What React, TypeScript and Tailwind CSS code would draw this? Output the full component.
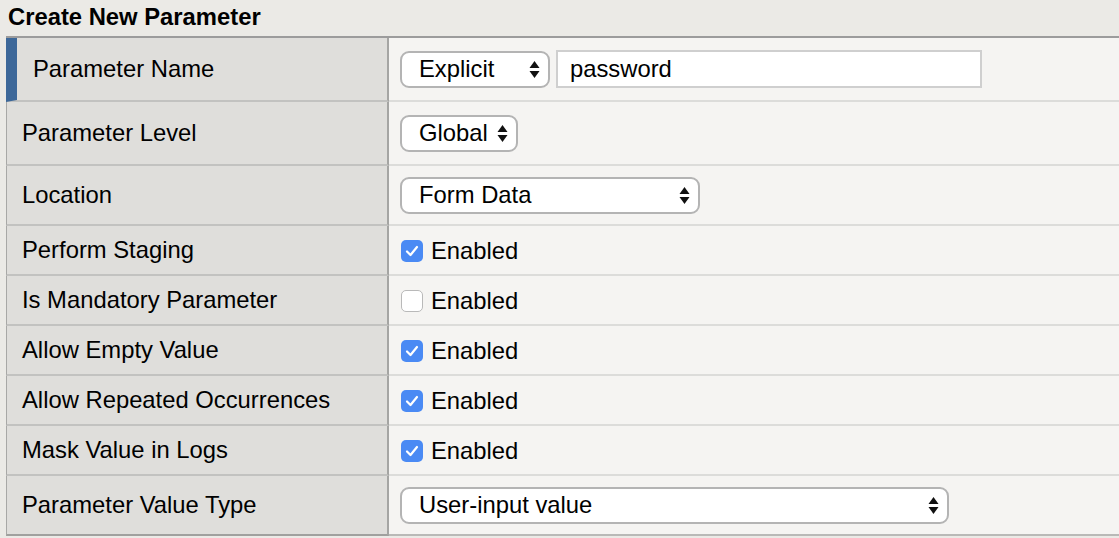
import React from "react";

type Row = {
  label: string;
  h: string;
  kind: "name" | "select" | "check";
  value?: string;
  width?: string;
  checked?: boolean;
};

const rows: Row[] = [
  { label: "Parameter Name", h: "h-[64px]", kind: "name" },
  { label: "Parameter Level", h: "h-[64px]", kind: "select", value: "Global", width: "w-[118px]" },
  { label: "Location", h: "h-[60px]", kind: "select", value: "Form Data", width: "w-[300px]" },
  { label: "Perform Staging", h: "h-[50px]", kind: "check", checked: true },
  { label: "Is Mandatory Parameter", h: "h-[50px]", kind: "check", checked: false },
  { label: "Allow Empty Value", h: "h-[50px]", kind: "check", checked: true },
  { label: "Allow Repeated Occurrences", h: "h-[50px]", kind: "check", checked: true },
  { label: "Mask Value in Logs", h: "h-[50px]", kind: "check", checked: true },
  { label: "Parameter Value Type", h: "h-[60px]", kind: "select", value: "User-input value", width: "w-[549px]" },
];

function Arrows() {
  return (
    <svg width="11" height="19" viewBox="0 0 11 19" className="shrink-0">
      <path d="M5.5 1 L10.5 8 L0.5 8 Z" fill="#111" />
      <path d="M5.5 18 L10.5 11 L0.5 11 Z" fill="#111" />
    </svg>
  );
}

function Select({ value, width }: { value: string; width: string }) {
  return (
    <div
      className={`${width} h-[37px] flex items-center justify-between pl-[17px] pr-[8px] bg-white border-2 border-[#b4b4b4] rounded-[9px]`}
    >
      <span>{value}</span>
      <Arrows />
    </div>
  );
}

function Checkbox({ checked }: { checked: boolean }) {
  if (checked) {
    return (
      <div className="w-[22px] h-[22px] rounded-[5px] bg-[#4a8af4] flex items-center justify-center">
        <svg width="14" height="12" viewBox="0 0 14 12">
          <path d="M2 6.5 L5.5 10 L12 2" stroke="white" strokeWidth="2.2" fill="none" strokeLinecap="round" strokeLinejoin="round" />
        </svg>
      </div>
    );
  }
  return <div className="w-[22px] h-[22px] rounded-[5px] bg-white border border-[#b9b9b9]" />;
}

export default function App() {
  return (
    <div
      className="w-[1119px] h-[538px] bg-[#ebeae6] text-black overflow-hidden"
      style={{ fontFamily: '"Liberation Sans", Arial, sans-serif' }}
    >
      <div className="h-[36px] flex items-center pl-[8px] pb-[2px]">
        <h2 className="text-[23.8px] font-bold leading-none">Create New Parameter</h2>
      </div>
      <div className="ml-[6px] border-t-2 border-[#9c9c9c] grid grid-cols-[383px_1fr] text-[23.8px]">
        {rows.map((r, i) => (
          <React.Fragment key={i}>
            <div
              className={`${r.h} flex items-center bg-[#dfdedb] border-b-2 border-[#c2c2c0] border-r-2 border-r-[#a5a5a3] ${
                i === 0 ? "border-l-[11px] border-l-[#3d6899] pl-[16px]" : "border-l border-l-[#a8a8a6] pl-[15px]"
              } ${i === rows.length - 1 ? "border-b-[#a0a09e]" : ""}`}
            >
              {r.label}
            </div>
            <div
              className={`${r.h} flex items-center pl-[11px] bg-[#f5f4f2] border-b-2 ${
                i === rows.length - 1 ? "border-[#b9b9b7]" : "border-[#dcdcda]"
              }`}
            >
              {r.kind === "name" && (
                <div className="flex items-center gap-[6px]">
                  <Select value="Explicit" width="w-[150px]" />
                  <div className="w-[426px] h-[38px] bg-white border-2 border-[#cfcfcf] flex items-center pl-[12px]">
                    password
                  </div>
                </div>
              )}
              {r.kind === "select" && <Select value={r.value!} width={r.width!} />}
              {r.kind === "check" && (
                <div className="flex items-center gap-[8px] pl-[1px] pt-[1px]">
                  <Checkbox checked={!!r.checked} />
                  <span>Enabled</span>
                </div>
              )}
            </div>
          </React.Fragment>
        ))}
      </div>
    </div>
  );
}
